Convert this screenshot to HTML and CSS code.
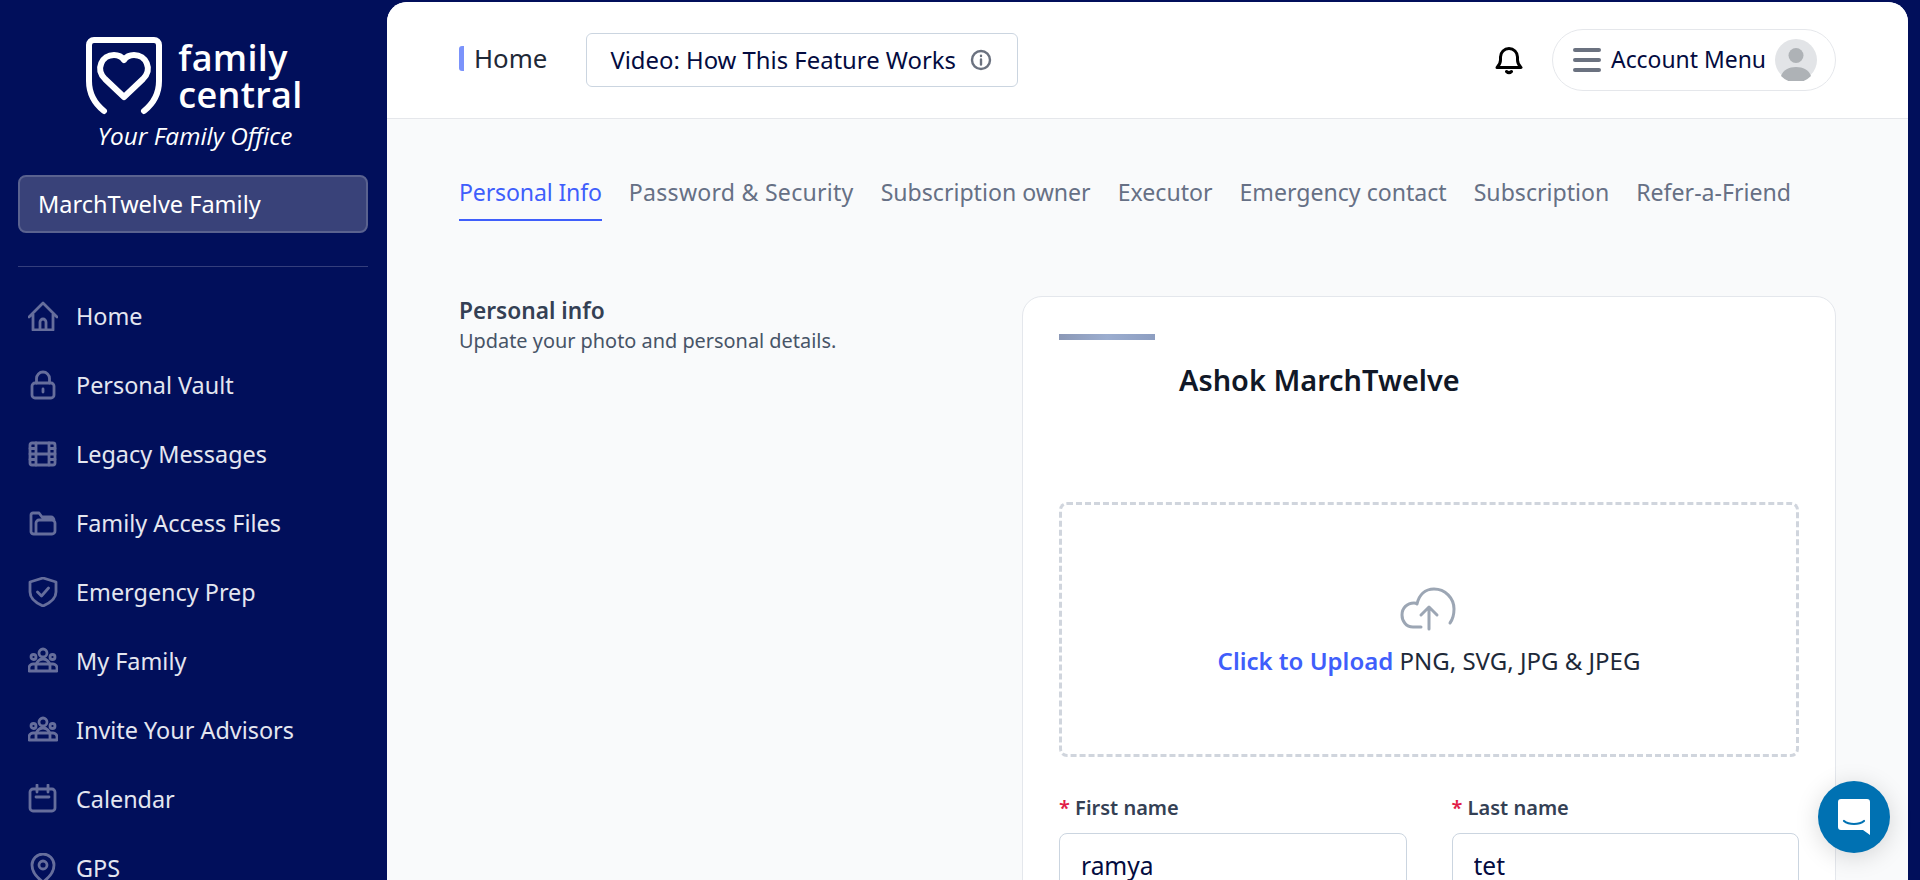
FILE: index.html
```html
<!DOCTYPE html>
<html lang="en">
<head>
    <meta charset="UTF-8">
    <title>Family Central</title>
    <link rel="stylesheet" href="styles.css">
</head>
<body>
    <aside class="sidebar">
        <div class="logo">
            <div class="logo-top">
                <svg class="logo-mark" viewBox="0 0 78 78" fill="none" stroke="#fff" stroke-linecap="round" stroke-linejoin="round">
                    <path stroke-width="6" d="M19 74C9 66 4 56 4 44V8a5 5 0 0 1 5-5h60a5 5 0 0 1 5 5v36c0 12-5 22-15 30"/>
                    <path stroke-width="6" d="M39 60L20 42c-10-10-3-24 9-24 4 0 8 2 10 5 2-3 6-5 10-5 12 0 19 14 9 24z"/>
                </svg>
                <div class="logo-name">family<br>central</div>
            </div>
            <div class="logo-tag">Your Family Office</div>
        </div>
        <div class="family-box">MarchTwelve Family</div>
        <div class="side-line"></div>
        <nav class="menu">
            <a class="menu-item">
                <svg viewBox="0 0 30 30"><path d="M1 16L15 2l14 14M5 13v16h20V13M12 29v-8a3 3 0 0 1 6 0v8"/></svg>
                Home
            </a>
            <a class="menu-item">
                <svg viewBox="0 0 30 30"><rect x="4" y="13" width="22" height="15" rx="3"/><path d="M8.500 13V8.500a6.500 6.500 0 0 1 13 0V13M15 19v3"/></svg>
                Personal Vault
            </a>
            <a class="menu-item">
                <svg viewBox="0 0 30 30"><rect x="2" y="4" width="25" height="22" rx="2"/><path d="M8 4v22M21 4v22M2 15h25M2 9.500h6M2 20.500h6M21 9.500h6M21 20.500h6"/></svg>
                Legacy Messages
            </a>
            <a class="menu-item">
                <svg viewBox="0 0 30 30"><path d="M3 24V7a2 2 0 0 1 2-2h6l3 4h9a3 3 0 0 1 3 3M3 24a3 3 0 0 0 3 2h18a3 3 0 0 0 3-3v-8a3 3 0 0 0-3-3H11a3 3 0 0 0-3 3v11"/></svg>
                Family Access Files
            </a>
            <a class="menu-item">
                <svg viewBox="0 0 30 30"><path d="M15 1l13 4v10c0 7-6 11-13 14C8 26 2 22 2 15V5zM9.500 15l4 4 7-8"/></svg>
                Emergency Prep
            </a>
            <a class="menu-item">
                <svg viewBox="0 0 30 30"><use href="#people"/></svg>
                My Family
            </a>
            <a class="menu-item">
                <svg viewBox="0 0 30 30"><use href="#people"/></svg>
                Invite Your Advisors
            </a>
            <a class="menu-item">
                <svg viewBox="0 0 30 30"><rect x="2" y="5" width="25" height="22" rx="3"/><path d="M9 1v7M20 1v7M8 13h13"/></svg>
                Calendar
            </a>
            <a class="menu-item">
                <svg viewBox="0 0 30 30"><path d="M15 29C8 24 4 18 4 12a11 11 0 0 1 22 0c0 6-4 12-11 17z"/><circle cx="15" cy="12" r="4"/></svg>
                GPS
            </a>
        </nav>
        <svg class="defs" width="0" height="0">
            <g id="people">
                <circle cx="15" cy="7" r="4"/><circle cx="5.500" cy="11" r="2.500"/><circle cx="24.500" cy="11" r="2.500"/>
                <path d="M1 25v-3a4 4 0 0 1 4-4h20a4 4 0 0 1 4 4v3zM8 25v-5a7 7 0 0 1 14 0v5"/>
            </g>
        </svg>
    </aside>

    <div class="main">
        <header class="topbar">
            <div class="page-title">Home</div>
            <button class="video-btn">
                Video: How This Feature Works
                <svg width="22" height="22" viewBox="0 0 22 22" fill="none" stroke="#6b7280" stroke-width="2.400" stroke-linecap="round"><circle cx="11" cy="11" r="9"/><path d="M11 10.500v5M11 6.800v.2"/></svg>
            </button>
            <svg class="bell" width="30" height="30" viewBox="0 0 30 30" fill="none" stroke="#000" stroke-width="3" stroke-linecap="round" stroke-linejoin="round"><path d="M3 22.500c2-2 3.500-4 3.500-7.500v-3a8.500 8.500 0 0 1 17 0v3c0 3.500 1.500 5.500 3.500 7.500zM12.500 26.500c1.500 1.300 3.500 1.300 5 0"/></svg>
            <div class="account">
                <div class="burger"><span></span><span></span><span></span></div>
                <span class="account-text">Account Menu</span>
                <svg class="avatar" viewBox="0 0 42 42"><circle cx="21" cy="21" r="21" fill="#e2e4e7"/><circle cx="21" cy="16.500" r="7.500" fill="#aeb2b6"/><path d="M6 37c2-6 8-9 15-9s13 3 15 9a21 21 0 0 1-30 0z" fill="#aeb2b6"/></svg>
            </div>
        </header>

        <div class="content">
            <div class="tabs">
                <a class="tab active">Personal Info</a>
                <a class="tab wide">Password &amp; Security</a>
                <a class="tab">Subscription owner</a>
                <a class="tab">Executor</a>
                <a class="tab">Emergency contact</a>
                <a class="tab">Subscription</a>
                <a class="tab">Refer-a-Friend</a>
            </div>

            <div class="section">
                <div class="section-info">
                    <h3>Personal info</h3>
                    <p>Update your photo and personal details.</p>
                </div>
                <div class="card">
                    <div class="skeleton"></div>
                    <h2 class="card-name">Ashok MarchTwelve</h2>
                    <div class="upload">
                        <svg width="58" height="44" viewBox="0 0 58 44" fill="none" stroke="#9ca6b4" stroke-width="3" stroke-linecap="round" stroke-linejoin="round"><path d="M21 40H13C6 40 2 34 2 28c0-7 5-12 12-12 1 0 2 0 3 1 2-9 8-15 17-15 11 0 20 9 20 20 0 6-1 10-4 14M29 42V21M21 28l8-8 8 8"/></svg>
                        <p><span class="upload-link">Click to Upload</span> PNG, SVG, JPG &amp; JPEG</p>
                    </div>
                    <div class="form-row">
                        <div class="field">
                            <label><span class="req">*</span> First name</label>
                            <input type="text" value="ramya">
                        </div>
                        <div class="field">
                            <label><span class="req">*</span> Last name</label>
                            <input type="text" value="tet">
                        </div>
                    </div>
                </div>
            </div>
        </div>
    </div>

    <button class="chat">
        <svg width="32" height="36" viewBox="0 0 32 36"><path d="M3 0h26a3 3 0 0 1 3 3v33l-7-5H3a3 3 0 0 1-3-3V3a3 3 0 0 1 3-3z" fill="#fff"/><path d="M6 22c5 4 15 4 20 0" fill="none" stroke="#0071b2" stroke-width="2.200" stroke-linecap="round"/></svg>
    </button>
</body>
</html>
```

FILE: styles.css
```css
* {
    box-sizing: border-box;
}
html, body {
    height: 100%;
}
body {
    margin: 0;
    display: flex;
    height: 880px;
    overflow: hidden;
    background-color: #010f5b;
    font-family: "Noto Sans", sans-serif;
    padding: 2px 12px 0 0;
}

/* sidebar */
.sidebar {
    width: 387px;
    flex-shrink: 0;
    padding: 35px 19px 0 18px;
    color: #fff;
}
.logo {
    height: 138px;
    display: flex;
    flex-direction: column;
    align-items: center;
}
.logo-top {
    display: flex;
    gap: 15px;
    align-items: flex-start;
    margin-left: 2px;
}
.logo-mark {
    width: 78px;
    height: 78px;
}
.logo-name {
    font-family: "Open Sans", sans-serif;
    font-weight: 600;
    font-size: 36px;
    line-height: 37px;
    letter-spacing: 0.3px;
    margin-top: 2px;
}
.logo-tag {
    font-family: "Open Sans", sans-serif;
    font-style: italic;
    font-size: 24.400px;
    line-height: 30px;
    margin: 6px 0 0 4px;
}
.family-box {
    height: 58px;
    padding-left: 18px;
    display: flex;
    align-items: center;
    background-color: #394279;
    border: 2px solid #5a628f;
    border-radius: 8px;
    font-size: 23.500px;
}
.side-line {
    height: 1px;
    background-color: #343e7c;
    margin: 33px 0 14px;
}
.menu-item {
    height: 69px;
    display: flex;
    align-items: center;
    gap: 18px;
    padding-left: 10px;
    font-size: 23.400px;
    color: #e4e6f0;
}
.menu-item svg {
    width: 30px;
    height: 30px;
    fill: none;
    stroke: #666e9c;
    stroke-width: 2.800;
    stroke-linecap: round;
    stroke-linejoin: round;
    flex-shrink: 0;
}
.defs {
    position: absolute;
}

/* top bar */
.main {
    flex: 1;
    min-width: 0;
    background-color: #f9fafb;
    border-radius: 20px 20px 0 0;
    overflow: hidden;
}
.topbar {
    height: 117px;
    display: flex;
    align-items: center;
    background-color: #fff;
    border-bottom: 1px solid #e5e7eb;
    padding: 0 72px 0 72px;
}
.page-title {
    height: 25px;
    display: flex;
    align-items: center;
    border-left: 5px solid #7b93fb;
    border-radius: 3px;
    padding-left: 10px;
    font-size: 25.800px;
    color: #1f2937;
    margin: -4px 39px 0 0;
}
.video-btn {
    width: 432px;
    height: 54px;
    display: flex;
    align-items: center;
    justify-content: space-between;
    padding: 0 25px 0 23px;
    background-color: #fff;
    border: 1px solid #cbd5e0;
    border-radius: 6px;
    font-family: inherit;
    font-size: 23.850px;
    color: #030b40;
}
.bell {
    margin-left: auto;
    margin-right: 28px;
}
.account {
    width: 284px;
    height: 62px;
    display: flex;
    align-items: center;
    padding: 0 18px 0 20px;
    border: 1px solid #e5e7eb;
    border-radius: 31px;
}
.burger {
    width: 28px;
    display: flex;
    flex-direction: column;
    gap: 6px;
    margin-right: 10px;
}
.burger span {
    height: 4px;
    background-color: #6b7280;
    border-radius: 2px;
}
.account-text {
    font-size: 22.900px;
    color: #030b40;
    flex: 1;
    white-space: nowrap;
    margin-top: -2px;
}
.avatar {
    width: 42px;
    height: 42px;
    flex-shrink: 0;
}

/* tabs */
.content {
    padding: 0 72px 0 72px;
}
.tabs {
    display: flex;
    gap: 27px;
    height: 103px;
    padding-top: 53px;
}
.tab {
    height: 49px;
    font-size: 23.100px;
    line-height: 40px;
    color: #667085;
    white-space: nowrap;
}
.tab.active {
    color: #3f5efb;
    border-bottom: 2px solid #3f5efb;
    letter-spacing: -0.150px;
}
.tab.wide {
    letter-spacing: 0.250px;
}

/* personal info */
.section {
    display: flex;
    margin-top: 74px;
}
.section-info {
    width: 563px;
    flex-shrink: 0;
}
.section-info h3 {
    margin: 0;
    font-size: 22.700px;
    line-height: 30px;
    font-weight: 600;
    color: #344054;
}
.section-info p {
    margin: 1px 0 0;
    font-size: 19.900px;
    line-height: 28px;
    color: #475467;
}
.card {
    flex: 1;
    height: 700px;
    padding: 37px 36px 0;
    background-color: #fff;
    border: 1px solid #e4e7ec;
    border-radius: 20px;
}
.skeleton {
    width: 96px;
    height: 6px;
    background: linear-gradient(90deg, #8b98b6, #9badcf 50%, #8d9ec1);
}
.card-name {
    margin: 20px 0 0 120px;
    font-size: 28.900px;
    line-height: 40px;
    font-weight: 600;
    color: #111827;
}
.upload {
    height: 255px;
    margin-top: 102px;
    display: flex;
    flex-direction: column;
    align-items: center;
    padding-top: 82px;
    border: 3px dashed #d0d5dd;
    border-radius: 8px;
}
.upload p {
    margin: 14px 0 0;
    font-size: 24px;
    line-height: 32px;
    color: #1d2939;
}
.upload-link {
    color: #3f5efb;
    font-weight: 600;
}
.form-row {
    display: flex;
    gap: 45px;
    margin-top: 37px;
}
.field {
    flex: 1;
}
.field label {
    display: block;
    font-size: 20px;
    line-height: 28px;
    font-weight: 600;
    color: #344054;
    margin-bottom: 11px;
}
.req {
    color: #e11d48;
}
.field input {
    width: 100%;
    height: 60px;
    padding: 4px 21px 0;
    border: 1px solid #cbd5e0;
    border-radius: 8px;
    font-family: inherit;
    font-size: 24.500px;
    color: #030b40;
}

/* chat button */
.chat {
    position: absolute;
    left: 1818px;
    top: 781px;
    width: 72px;
    height: 72px;
    display: flex;
    align-items: center;
    justify-content: center;
    border: none;
    border-radius: 50%;
    background-color: #0071b2;
    box-shadow: 0 4px 24px rgba(0, 0, 0, 0.15);
}
```
